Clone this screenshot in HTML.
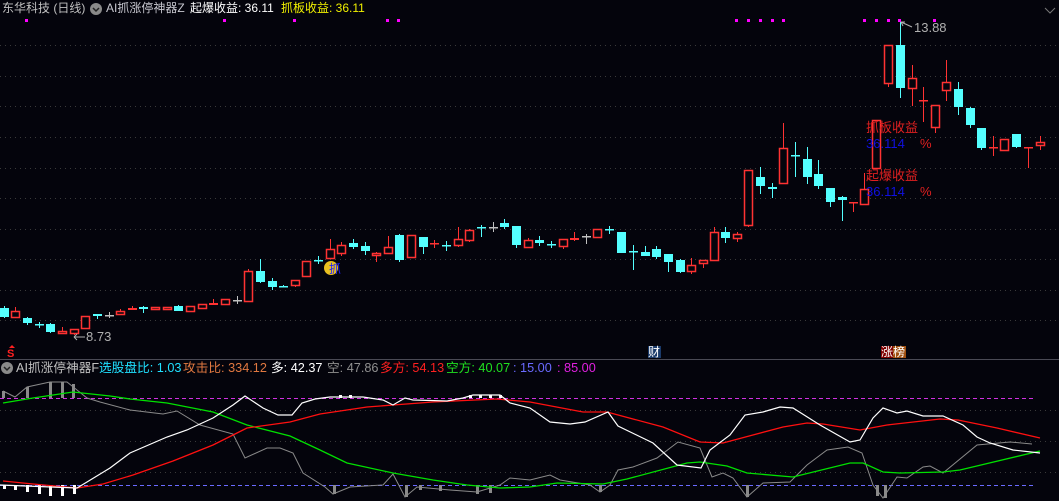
<!DOCTYPE html>
<html><head><meta charset="utf-8">
<style>
html,body{margin:0;padding:0;background:#04040c;width:1059px;height:501px;overflow:hidden;font-family:"Liberation Sans","Noto Sans CJK SC",sans-serif;}
svg{position:absolute;left:0;top:0}
.t{position:absolute;font-size:12px;white-space:nowrap;line-height:15px}
.b{font-size:12.7px}
</style></head><body>
<svg id="s" width="1059" height="501" xmlns="http://www.w3.org/2000/svg">
<g stroke="#3a3a3a" stroke-dasharray="1,4" stroke-width="1">
<line x1="0" y1="45.5" x2="1059" y2="45.5"/><line x1="0" y1="76.5" x2="1059" y2="76.5"/>
<line x1="0" y1="106.5" x2="1059" y2="106.5"/><line x1="0" y1="137.5" x2="1059" y2="137.5"/>
<line x1="0" y1="168.5" x2="1059" y2="168.5"/><line x1="0" y1="198.5" x2="1059" y2="198.5"/>
<line x1="0" y1="229.5" x2="1059" y2="229.5"/><line x1="0" y1="259.5" x2="1059" y2="259.5"/>
<line x1="0" y1="290.5" x2="1059" y2="290.5"/><line x1="0" y1="320.5" x2="1059" y2="320.5"/>
<line x1="0" y1="410.5" x2="1059" y2="410.5"/><line x1="0" y1="441.5" x2="1059" y2="441.5"/>
<line x1="0" y1="472.5" x2="1059" y2="472.5"/>
</g>
<line x1="0" y1="359.5" x2="1059" y2="359.5" stroke="#4a4a55" stroke-width="1"/>
<g id="c"></g>
<g id="dots" fill="#ff00ff"></g>
<line x1="0" y1="398.5" x2="1035" y2="398.5" stroke="#d030e0" stroke-dasharray="4,3"/>
<line x1="0" y1="485.5" x2="1035" y2="485.5" stroke="#6a6aff" stroke-dasharray="4,3"/>
<g id="bars"></g>
<polyline fill="none" stroke="#8a8a8a" stroke-width="1" points="3,391 15,397 27,387 50,382 67,382 77,390 87,398 100,402 130,410 163,414 177,411 200,425 233,434 245,458 267,448 280,448 293,453 303,473 325,487 333,494 350,487 383,485 393,474 405,497 417,487 450,490 477,492 500,485 510,478 530,480 550,475 560,480 590,485 600,492 610,485 618,470 633,467 657,458 678,442 700,448 712,477 723,473 733,478 747,497 763,483 790,482 807,465 827,450 848,447 862,453 873,485 883,498 897,477 907,478 923,467 930,466 943,473 977,445 1010,442 1032,444"/>
<polyline fill="none" stroke="#00e000" stroke-width="1.3" points="3,403 33,398 73,392 110,396 130,399 167,403 213,412 247,425 290,436 320,450 347,463 393,473 433,480 467,485 500,488 530,487 557,483 603,484 627,479 687,463 700,462 727,466 747,473 793,477 850,463 863,463 883,472 900,473 943,472 960,470 1040,451"/>
<polyline fill="none" stroke="#ff1010" stroke-width="1.3" points="3,481 33,484 77,488 103,484 133,475 173,461 213,445 247,428 290,422 320,414 367,407 393,405 433,402 497,399 530,402 583,412 607,412 663,427 700,442 723,443 783,427 807,423 823,424 860,430 887,425 940,419 958,420 997,428 1040,438"/>
<polyline fill="none" stroke="#ffffff" stroke-width="1.2" points="0,485 77,488 87,482 110,468 130,453 167,437 187,430 213,418 233,405 245,396 263,408 278,415 292,415 302,403 315,399 330,397 363,397 383,400 393,405 405,398 413,400 447,401 463,398 473,395 500,395 510,403 530,408 550,422 570,424 585,422 608,412 618,426 653,443 677,465 701,468 710,450 730,435 745,415 763,412 780,407 793,408 820,425 850,442 860,440 873,418 883,408 897,413 907,411 923,416 943,416 963,425 977,437 990,443 1013,450 1040,453"/>
<text x="866" y="132" fill="#e02020" font-size="13" font-family="Liberation Sans,Noto Sans CJK SC,sans-serif">抓板收益</text>
<text x="866" y="148" fill="#1010e0" font-size="13" font-family="Liberation Sans,sans-serif">36.114</text>
<text x="920" y="148" fill="#e02020" font-size="13" font-family="Liberation Sans,sans-serif">%</text>
<text x="866" y="180" fill="#e02020" font-size="13" font-family="Liberation Sans,Noto Sans CJK SC,sans-serif">起爆收益</text>
<text x="866" y="196" fill="#1010e0" font-size="13" font-family="Liberation Sans,sans-serif">36.114</text>
<text x="920" y="196" fill="#e02020" font-size="13" font-family="Liberation Sans,sans-serif">%</text>
<text x="914" y="32" fill="#b0b0b0" font-size="13" font-family="Liberation Sans,sans-serif">13.88</text>
<path d="M901,22 L912,27 M901,22 l4,0 M901,22 l2,4" stroke="#b0b0b0" fill="none"/>
<text x="86" y="341" fill="#b0b0b0" font-size="13" font-family="Liberation Sans,sans-serif">8.73</text>
<path d="M74,337 L85,337 M74,337 l3,-3 M74,337 l3,3" stroke="#b0b0b0" fill="none"/>
<circle cx="331" cy="268" r="7" fill="#e8c020"/>
<text x="329" y="273" fill="#2020ff" font-size="12" font-family="Noto Sans CJK SC,sans-serif">抓</text>
<text x="7" y="357" fill="#ff2020" font-size="11" font-weight="bold" font-family="Liberation Sans,sans-serif">S</text>
<path d="M9,348 l3,-3 l3,3 z" fill="#ff2020"/>
<rect x="648" y="346" width="13" height="12" fill="#1a3a6a"/>
<text x="648" y="356" fill="#ffffff" font-size="12" font-family="Noto Sans CJK SC,sans-serif">财</text>
<rect x="881" y="346" width="12" height="12" fill="#800000"/>
<rect x="893" y="346" width="13" height="12" fill="#a05010"/>
<text x="881" y="356" fill="#ffffff" font-size="12" font-family="Noto Sans CJK SC,sans-serif">涨榜</text>
<path d="M1045,8 l5,5 l5,-5" stroke="#777" fill="none"/>
</svg>
<div class="t" style="left:2px;top:1px;color:#c0c0c0">东华科技 (日线)</div>
<svg width="14" height="14" style="left:89px;top:2px"><circle cx="7" cy="7" r="6" fill="#8a8a8a"/><path d="M4,6 l3,3 l3,-3" stroke="#222" stroke-width="1.5" fill="none"/></svg>
<div class="t" style="left:106px;top:1px;color:#c8c8d0">AI抓涨停神器Z</div>
<div class="t" style="left:190px;top:1px;color:#ffffff">起爆收益: 36.11</div>
<div class="t" style="left:281px;top:1px;color:#f0f000">抓板收益: 36.11</div>
<svg width="14" height="14" style="left:0px;top:361px"><circle cx="7" cy="7" r="6" fill="#8a8a8a"/><path d="M4,6 l3,3 l3,-3" stroke="#222" stroke-width="1.5" fill="none"/></svg>
<div class="t b" style="left:16px;top:361px;color:#c0c0c0">AI抓涨停神器F</div>
<div class="t b" style="left:99px;top:361px;color:#20e0ff">选股盘比: 1.03</div>
<div class="t b" style="left:183px;top:361px;color:#e07840">攻击比: 334.12</div>
<div class="t b" style="left:271px;top:361px;color:#ffffff">多: 42.37</div>
<div class="t b" style="left:327px;top:361px;color:#909090">空: 47.86</div>
<div class="t b" style="left:380px;top:361px;color:#ff2020">多方: 54.13</div>
<div class="t b" style="left:446px;top:361px;color:#20e020">空方: 40.07</div>
<div class="t b" style="left:513px;top:361px;color:#6a6aff">: 15.00</div>
<div class="t b" style="left:557px;top:361px;color:#e020e0">: 85.00</div>
<script>
var D=[[4,308,317,306,318,'c'],[15,311,317,307,317,'r'],[27,318,323,317,325,'c'],[39,324,324,322,328,'c'],[50,324,332,323,333,'c'],[62,331,333,327,333,'r'],[74,329,333,329,335,'r'],[85,316,328,316,328,'r'],[97,314,315,314,319,'c'],[109,315,315,312,318,'g'],[120,311,314,309,314,'r'],[132,308,309,306,310,'R'],[143,307,309,306,313,'c'],[155,307,309,307,310,'r'],[167,307,309,307,310,'r'],[178,306,311,305,311,'c'],[190,306,311,306,312,'r'],[202,304,308,304,309,'r'],[213,303,304,299,304,'R'],[225,299,304,299,304,'r'],[237,300,300,296,304,'g'],[248,271,301,269,301,'r'],[260,271,282,259,283,'c'],[272,281,287,278,290,'c'],[283,286,286,285,287,'c'],[295,280,285,280,287,'r'],[306,261,276,261,276,'r'],[318,260,260,256,264,'c'],[330,249,258,239,258,'r'],[341,245,253,242,256,'r'],[353,243,247,239,249,'c'],
[365,246,251,242,255,'c'],[376,253,255,252,262,'r'],[388,247,253,236,254,'r'],[399,235,260,234,262,'c'],[411,235,257,235,258,'r'],[423,237,247,237,254,'c'],[434,243,243,240,248,'R'],[446,245,245,241,251,'c'],[458,239,245,227,247,'r'],[469,230,240,229,242,'r'],[481,227,227,225,237,'c'],[493,227,227,222,232,'g'],[504,223,227,219,229,'c'],[516,226,245,226,248,'c'],[528,240,247,238,247,'r'],[539,240,243,236,246,'c'],[551,244,244,241,248,'c'],[563,239,246,239,249,'r'],[574,238,239,232,241,'R'],[586,236,236,234,244,'g'],[597,229,237,229,237,'r'],[609,229,229,226,234,'c'],[621,232,253,232,253,'c'],[633,251,251,245,270,'c'],[645,252,256,246,256,'c'],[656,249,257,246,259,'c'],[668,254,262,254,272,'c'],[680,260,272,259,273,'c'],[691,265,271,258,274,'r'],[703,260,263,260,268,'r'],[714,232,260,227,260,'r'],[725,232,238,227,243,'c'],[737,234,238,232,242,'r'],
[748,170,225,170,227,'r'],[760,177,186,167,194,'c'],[772,187,189,183,198,'c'],[783,148,183,123,183,'r'],[795,155,155,142,177,'c'],[807,159,177,147,184,'c'],[818,174,186,160,189,'c'],[830,188,202,188,207,'c'],[842,197,200,196,221,'c'],[853,202,202,202,212,'r'],[864,189,204,173,204,'r'],[876,120,168,120,168,'r'],[888,45,83,45,87,'r'],[900,45,88,22,98,'c'],[912,78,88,65,106,'r'],[923,100,100,87,122,'r'],[935,105,127,105,133,'r'],[946,82,90,60,101,'r'],[958,89,107,82,115,'c'],[970,108,125,107,128,'c'],[981,128,148,128,150,'c'],[993,147,147,136,156,'r'],[1004,139,150,139,150,'r'],[1016,134,147,134,148,'c'],[1028,147,147,147,168,'R'],[1040,142,145,136,150,'r']];
var col={c:'#54ffff',r:'#ff3232',R:'#ff3232',g:'#c0c0c0'},h='';
D.forEach(function(d){var x=d[0],t=d[1],b=d[2],c=col[d[5]];
h+='<line x1="'+(x+.5)+'" y1="'+d[3]+'" x2="'+(x+.5)+'" y2="'+d[4]+'" stroke="'+c+'"/>';
if(b-t<2){h+='<rect x="'+(x-4)+'" y="'+t+'" width="9" height="'+Math.max(1.5,b-t+1)+'" fill="'+c+'"/>';}
else if(d[5]=='r'){h+='<rect x="'+(x-4)+'.5" y="'+(t+.5)+'" width="8" height="'+(b-t)+'" fill="#04040c" stroke="'+c+'" stroke-width="1.5"/>';}
else{h+='<rect x="'+(x-4)+'" y="'+t+'" width="9" height="'+(b-t)+'" fill="'+c+'"/>';}});
document.getElementById('c').innerHTML=h;
var dx=[26,224,294,387,398,736,748,760,772,783,864,876,888,899,934],dh='';
dx.forEach(function(x){dh+='<rect x="'+(x-1)+'" y="19" width="3" height="3"/>';});
document.getElementById('dots').innerHTML=dh;
var bh='';
[[3,391,'#8a8a8a'],[27,387,'#8a8a8a'],[50,382,'#8a8a8a'],[62,382,'#8a8a8a'],[73,384,'#8a8a8a']].forEach(function(b){bh+='<rect x="'+(b[0]-1)+'" y="'+b[1]+'" width="3" height="'+(398-b[1])+'" fill="'+b[2]+'"/>';});
[[4,489],[15,490],[27,492],[39,494],[50,496],[62,496],[74,494]].forEach(function(b){bh+='<rect x="'+(b[0]-1)+'" y="485" width="3" height="'+(b[1]-485)+'" fill="#fff"/>';});
[[334,494],[406,497],[420,490],[440,491],[477,494],[490,493],[600,492],[747,497],[877,496],[885,498]].forEach(function(b){bh+='<rect x="'+(b[0]-1)+'" y="485" width="3" height="'+(b[1]-485)+'" fill="#8a8a8a"/>';});
[[340,395],[350,395],[470,395],[480,395],[490,395],[500,395]].forEach(function(b){bh+='<rect x="'+(b[0]-1)+'" y="'+b[1]+'" width="3" height="'+(398-b[1])+'" fill="#fff"/>';});
document.getElementById('bars').innerHTML=bh;
</script>
</body></html>
